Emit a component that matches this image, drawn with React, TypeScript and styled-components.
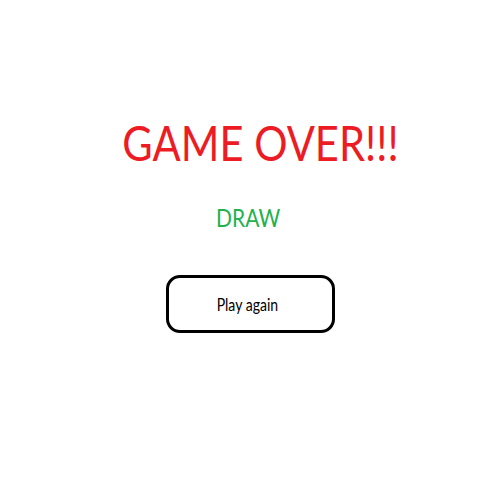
import React from "react";
import styled, { createGlobalStyle } from "styled-components";

const Global = createGlobalStyle`
  html, body { margin: 0; padding: 0; background: #ffffff; }
  #root { width: 500px; height: 500px; }
`;

const Screen = styled.div`
  width: 500px;
  height: 500px;
  display: flex;
  flex-direction: column;
  align-items: center;
  padding-top: 112px;
  box-sizing: border-box;
  font-family: Lato, "Open Sans", sans-serif;
`;

const Narrow = styled.span<{ $scale: number }>`
  display: inline-block;
  transform: scaleX(${(p) => p.$scale});
  transform-origin: center;
`;

const Title = styled.h1`
  margin: 0 0 0 20px;
  font-size: 49px;
  font-weight: 400;
  line-height: 60px;
  color: #ed1c24;
  white-space: nowrap;
`;

const Result = styled.div`
  margin: 29px 4px 0 0;
  font-size: 25px;
  line-height: 32px;
  color: #22b14c;
`;

const Button = styled.button`
  margin-top: 42px;
  width: 169px;
  height: 58px;
  box-sizing: border-box;
  border: 3px solid #000;
  border-radius: 14px;
  background: #fff;
  font-family: Lato, "Open Sans", sans-serif;
  font-size: 18px;
  color: #000;
  padding: 0 6px 0 0;
  cursor: pointer;
`;

export default function App() {
  return (
    <>
      <Global />
      <Screen>
        <Title>
          <Narrow $scale={0.85}>GAME OVER!!!</Narrow>
        </Title>
        <Result>
          <Narrow $scale={0.84}>DRAW</Narrow>
        </Result>
        <Button>
          <Narrow $scale={0.78}>Play again</Narrow>
        </Button>
      </Screen>
    </>
  );
}
